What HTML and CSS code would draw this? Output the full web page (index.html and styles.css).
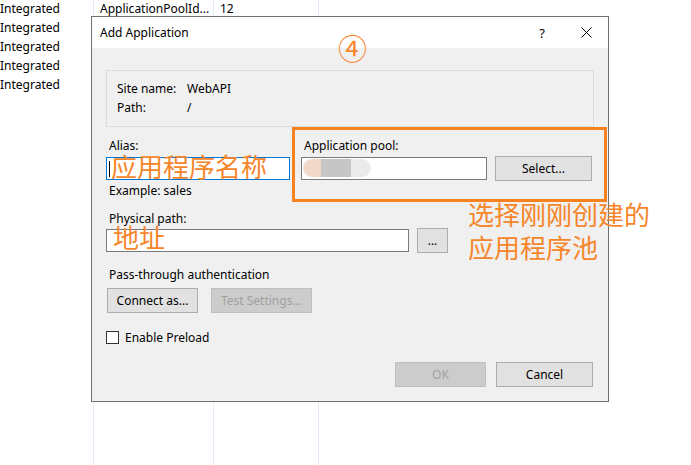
FILE: index.html
```html
<!DOCTYPE html>
<html>
<head>
<meta charset="utf-8">
<link rel="stylesheet" href="styles.css">
</head>
<body>
<div class="bg-table">
  <div class="bg-col bg-col1">
    <div class="bg-rows">
      <div class="bg-cell">Integrated</div>
      <div class="bg-cell">Integrated</div>
      <div class="bg-cell">Integrated</div>
      <div class="bg-cell">Integrated</div>
      <div class="bg-cell">Integrated</div>
    </div>
  </div>
  <div class="bg-col bg-col2">
    <div class="bg-rows"><div class="bg-cell pad">ApplicationPoolId...</div></div>
  </div>
  <div class="bg-col bg-col3">
    <div class="bg-rows"><div class="bg-cell pad">12</div></div>
  </div>
</div>

<div class="dialog">
  <div class="titlebar">
    <div class="title">Add Application</div>
    <div class="tb-btn help">?</div>
    <div class="tb-btn close">
      <svg width="11" height="11" viewBox="0 0 11 11"><path d="M0.5 0.5 L10.5 10.5 M10.5 0.5 L0.5 10.5" stroke="#000" stroke-width="1" fill="none"/></svg>
    </div>
  </div>
  <div class="body">
    <div class="groupbox">
      <div class="info-row"><div class="info-label">Site name:</div><div>WebAPI</div></div>
      <div class="info-row"><div class="info-label">Path:</div><div>/</div></div>
    </div>
    <div class="cols">
      <div class="col-left">
        <div class="label top-label">Alias:</div>
        <div class="textbox focus alias-box"><span class="caret"></span></div>
        <div class="label example">Example: sales</div>
      </div>
      <div class="col-right">
        <div class="label top-label">Application pool:</div>
        <div class="field-row pool-row">
          <div class="textbox pool-box">
            <div class="blob"><span class="blob-a"></span><span class="blob-b"></span><span class="blob-c"></span></div>
          </div>
          <div class="btn select-btn">Select...</div>
        </div>
      </div>
    </div>
    <div class="label path-label">Physical path:</div>
    <div class="field-row path-row">
      <div class="textbox path-box"></div>
      <div class="btn dots-btn">...</div>
    </div>
    <div class="label pass-label">Pass-through authentication</div>
    <div class="btn-row">
      <div class="btn connect-btn">Connect as...</div>
      <div class="btn disabled test-btn">Test Settings...</div>
    </div>
    <div class="check-row">
      <span class="checkbox"></span>
      <span>Enable Preload</span>
    </div>
    <div class="footer">
      <div class="btn disabled ok-btn">OK</div>
      <div class="btn cancel-btn">Cancel</div>
    </div>
  </div>
</div>

<div class="anno-circle">④</div>
<div class="anno-box"></div>
<div class="anno anno-alias">应用程序名称</div>
<div class="anno anno-path">地址</div>
<div class="anno anno-pool">选择刚刚创建的<br>应用程序池</div>
</body>
</html>
```

FILE: styles.css
```css
* { box-sizing: border-box; }
html, body { margin: 0; padding: 0; }
body {
  width: 691px;
  height: 465px;
  overflow: hidden;
  position: relative;
  background: #fff;
  color: #000;
  font-family: "Noto Sans", "Open Sans", sans-serif;
  font-size: 12px;
}

/* background list */
.bg-table { display: flex; height: 465px; }
.bg-col { border-right: 1px solid #e3edf9; height: 100%; }
.bg-col1 { width: 94px; }
.bg-col2 { width: 120px; }
.bg-col3 { width: 105px; }
.bg-rows { margin-top: -1px; display: flex; flex-direction: column; }
.bg-cell { height: 19px; line-height: 19px; white-space: nowrap; }
.bg-cell.pad { padding-left: 6px; }

/* dialog */
.dialog {
  position: absolute;
  left: 91px;
  top: 16px;
  width: 518px;
  height: 386px;
  border: 1px solid #707070;
  background: #f0f0f0;
  display: flex;
  flex-direction: column;
}
.titlebar {
  height: 31px;
  background: #fff;
  display: flex;
  align-items: center;
  padding-left: 8px;
}
.title { flex: 1; }
.tb-btn {
  width: 44px;
  height: 31px;
  display: flex;
  align-items: center;
  justify-content: center;
  font-size: 13px;
}
.tb-btn svg { display: block; }

.body {
  padding: 0 14px;
  display: flex;
  flex-direction: column;
}
.groupbox {
  margin-top: 22px;
  height: 57px;
  border: 1px solid #dcdcdc;
  padding: 8px 0 0 10px;
}
.info-row { display: flex; line-height: 19px; }
.info-label { width: 70px; }

.label { line-height: 16px; padding-left: 3px; white-space: nowrap; }
.cols { display: flex; gap: 11px; }
.col-left { width: 184px; }
.col-right { flex: 1; }
.top-label { margin-top: 11px; }

.textbox {
  height: 23px;
  background: #fff;
  border: 1px solid #7a7a7a;
}
.textbox.focus { border-color: #0078d7; }
.alias-box {
  margin-top: 3px;
  display: flex;
  align-items: center;
  padding-left: 2px;
}
.caret { width: 1px; height: 16px; background: #000; }
.example { margin-top: 3px; }

.field-row { display: flex; align-items: center; gap: 8px; }
.pool-row { margin-top: 2px; }
.pool-box { width: 186px; padding: 1px; }
.blob { display: flex; height: 18px; }
.blob-a { width: 18px; background: #f0d9c9; border-radius: 9px 0 0 9px; }
.blob-b { width: 30px; background: #c6c6c6; }
.blob-c { width: 20px; background: #ebebeb; border-radius: 0 9px 9px 0; }

.btn {
  height: 25px;
  background: #e1e1e1;
  border: 1px solid #adadad;
  display: flex;
  align-items: center;
  justify-content: center;
  white-space: nowrap;
}
.btn.disabled {
  background: #cccccc;
  border-color: #bfbfbf;
  color: #a0a0a0;
}
.select-btn { width: 97px; }

.path-label { margin-top: 12px; }
.path-row { margin-top: 1px; }
.path-box { width: 303px; }
.dots-btn { width: 31px; }

.pass-label { margin-top: 14px; }
.btn-row { display: flex; gap: 13px; margin-top: 5px; padding-left: 1px; }
.connect-btn { width: 91px; }
.test-btn { width: 101px; }

.check-row {
  margin-top: 16px;
  height: 16px;
  display: flex;
  align-items: center;
  gap: 6px;
}
.checkbox {
  width: 13px;
  height: 13px;
  background: #fff;
  border: 1px solid #333;
}

.footer {
  margin-top: 17px;
  display: flex;
  justify-content: flex-end;
  gap: 10px;
  padding-right: 1px;
}
.ok-btn { width: 91px; }
.cancel-btn { width: 97px; }

/* annotations */
.anno {
  position: absolute;
  color: #f7862a;
  font-family: "Noto Sans CJK SC", sans-serif;
  font-size: 26px;
  line-height: 26px;
  white-space: nowrap;
}
.anno-alias { left: 111px; top: 153px; }
.anno-path { left: 113px; top: 224px; }
.anno-pool { left: 468px; top: 197px; line-height: 33px; }
.anno-circle {
  position: absolute;
  left: 338px;
  top: 31px;
  color: #f7862a;
  font-family: "Noto Sans CJK SC", sans-serif;
  font-size: 29px;
  line-height: 32px;
}
.anno-box {
  position: absolute;
  left: 292px;
  top: 127px;
  width: 315px;
  height: 75px;
  border: 3px solid #f5821f;
}
```
